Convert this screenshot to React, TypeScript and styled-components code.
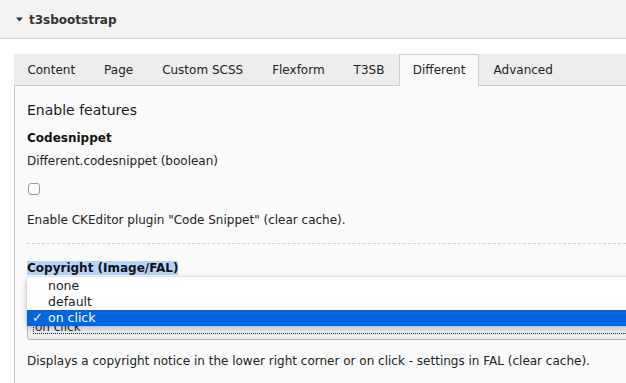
import React from "react";
import styled, { createGlobalStyle } from "styled-components";

const Global = createGlobalStyle`
  html, body { margin: 0; padding: 0; background: #fff; }
  body {
    font-family: "DejaVu Sans", Verdana, sans-serif;
    font-size: 12px;
    color: #1a1a1a;
    overflow: hidden;
  }
`;

const Page = styled.div`
  width: 626px;
  height: 383px;
  overflow: hidden;
`;

const Header = styled.div`
  height: 37px;
  padding: 1px 0 0 16px;
  background: #f2f2f2;
  border-bottom: 1px solid #cfcfcf;
  display: flex;
  align-items: center;
  gap: 6px;
  font-weight: bold;
  color: #333;
`;

const Body = styled.div`
  padding: 15px 0 0 14px;
`;

const TabBar = styled.div`
  display: flex;
  height: 31px;
  background: #ededed;
  border-bottom: 1px solid #cccccc;
  margin-right: -40px;
`;

const Tab = styled.div<{ $active?: boolean }>`
  padding: 2px 13.4px 0;
  margin-right: 2.2px;
  line-height: 29px;
  color: #222;
  white-space: nowrap;
  ${(p) =>
    p.$active &&
    `
    background: #fafafa;
    border: 1px solid #cccccc;
    border-bottom: none;
    box-sizing: border-box;
    height: 32px;
    padding: 1px 12.8px 0;
    margin-left: -1px;
    margin-right: 1px;
  `}
`;

const Panel = styled.div`
  background: #fafafa;
  border-left: 1px solid #cccccc;
  padding: 14px 0 40px 12px;
  height: 400px;
`;

const Heading = styled.div`
  font-size: 14px;
  line-height: 20px;
  color: #1a1a1a;
`;

const Label = styled.div<{ $mt?: number }>`
  font-weight: bold;
  line-height: 18px;
  margin-top: ${(p) => p.$mt ?? 0}px;
  color: #111;
`;

const Selected = styled.span`
  background: #b3d4fd;
`;

const Text = styled.div<{ $mt: number }>`
  line-height: 18px;
  margin-top: ${(p) => p.$mt}px;
  white-space: nowrap;
  color: #222;
`;

const Check = styled.input`
  appearance: none;
  display: block;
  width: 12px;
  height: 12px;
  margin: 13px 0 0 1px;
  border: 1px solid #9a9a9a;
  border-radius: 3px;
  background: #fff;
  box-sizing: border-box;
`;

const Divider = styled.div`
  margin-top: 14px;
  border-top: 1px dashed #cfcfcf;
`;

const Field = styled.div`
  position: relative;
  margin-top: 15px;
`;

const SelectBox = styled.div`
  margin-top: 39px;
  height: 24px;
  box-sizing: border-box;
  border: 1px solid #b5b5b5;
  border-radius: 3px;
  background: linear-gradient(#f6f6f6, #ececec);
  margin-right: -20px;
  padding: 3px 5px;
`;

const Focus = styled.div`
  border: 1px dotted #222;
  height: 14px;
  box-sizing: border-box;
  line-height: 12px;
  padding-left: 1px;
  color: #222;
`;

const Popup = styled.div`
  position: absolute;
  top: 18px;
  left: 0;
  right: -30px;
  background: #fff;
  box-shadow: 0 0 1px rgba(0, 0, 0, 0.35), 0 2px 6px rgba(0, 0, 0, 0.25);
  border-radius: 3px;
  padding-top: 1px;
`;

const Option = styled.div<{ $sel?: boolean }>`
  height: 16px;
  line-height: 16px;
  display: flex;
  color: ${(p) => (p.$sel ? "#fff" : "#222")};
  background: ${(p) => (p.$sel ? "#0065e0" : "transparent")};
  font-size: 12.5px;
`;

const Tick = styled.span`
  width: 21px;
  padding-left: 5px;
  box-sizing: border-box;
  font-size: 13px;
  font-weight: bold;
`;

const Caret = () => (
  <svg width="7" height="5" viewBox="0 0 7 5">
    <path d="M0 0.5 L7 0.5 L3.5 4.5 Z" fill="#333" />
  </svg>
);

export default function App() {
  const tabs = ["Content", "Page", "Custom SCSS", "Flexform", "T3SB", "Different", "Advanced"];
  return (
    <Page>
      <Global />
      <Header>
        <Caret />
        <span>t3sbootstrap</span>
      </Header>
      <Body>
        <TabBar>
          {tabs.map((t) => (
            <Tab key={t} $active={t === "Different"}>
              {t}
            </Tab>
          ))}
        </TabBar>
        <Panel>
          <Heading>Enable features</Heading>
          <Label $mt={9}>Codesnippet</Label>
          <Text $mt={5}>Different.codesnippet (boolean)</Text>
          <Check type="checkbox" />
          <Text $mt={16}>Enable CKEditor plugin "Code Snippet" (clear cache).</Text>
          <Divider />
          <Field>
            <Label>
              <Selected>Copyright (Image/FAL)</Selected>
            </Label>
            <SelectBox>
              <Focus>on click</Focus>
            </SelectBox>
            <Popup>
              <Option>
                <Tick />
                none
              </Option>
              <Option>
                <Tick />
                default
              </Option>
              <Option $sel>
                <Tick>✓</Tick>
                on click
              </Option>
            </Popup>
          </Field>
          <Text $mt={12}>
            Displays a copyright notice in the lower right corner or on click - settings in FAL (clear cache).
          </Text>
        </Panel>
      </Body>
    </Page>
  );
}
